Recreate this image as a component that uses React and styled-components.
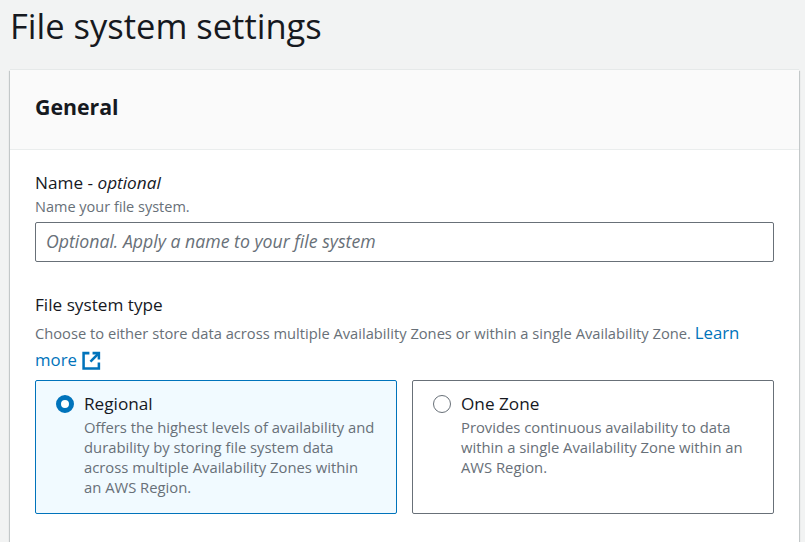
import React from 'react'
import styled, { createGlobalStyle } from 'styled-components'

const Global = createGlobalStyle`
    html, body {
        margin: 0;
        height: 100%;
        overflow: hidden;
        background: #f2f3f3;
        font-family: "Open Sans", "Noto Sans", sans-serif;
        color: #16191f;
    }
`

const Page = styled.div`
    width: 805px;
    height: 542px;
    overflow: hidden;
    padding: 0 6px 0 10px;
    box-sizing: border-box;
`

const Title = styled.h1`
    margin: 0;
    height: 70px;
    padding-top: 7px;
    box-sizing: border-box;
    font-size: 34.5px;
    line-height: 38px;
    font-weight: 400;
    color: #16191f;
`

const Card = styled.section`
    background: #fff;
    box-shadow: 0 -1px 0 0 #e6e9e9, 0 1px 1px 0 rgba(0, 28, 36, 0.3), 1px 1px 1px 0 rgba(0, 28, 36, 0.15), -1px 1px 1px 0 rgba(0, 28, 36, 0.15);
`

const CardHeader = styled.div`
    height: 80px;
    padding: 0 25px 6px;
    display: flex;
    align-items: center;
    background: #fafafa;
    border-bottom: 1px solid #eaeded;
    box-sizing: border-box;
`

const CardTitle = styled.h2`
    margin: 0;
    font-size: 21.3px;
    font-weight: 700;
    line-height: 26px;
`

const CardBody = styled.div`
    padding: 22px 25px 60px;
`

const Field = styled.div`
    margin-bottom: ${props => props.$gap || 0}px;
`

const Label = styled.div`
    font-size: 17.2px;
    line-height: 22px;
    em { font-style: italic; }
`

const Hint = styled.div`
    font-size: 14.5px;
    line-height: 20px;
    margin-top: 3px;
    color: #687078;
`

const Description = styled.div`
    margin-top: 4px;
    font-size: 14.7px;
    line-height: 26.6px;
    color: #687078;
`

const TextInput = styled.input`
    display: block;
    width: 100%;
    height: 40px;
    margin-top: 5px;
    padding: 0 10px 2px;
    box-sizing: border-box;
    border: 1px solid #687078;
    border-radius: 2px;
    background: #fff;
    font: italic 17.7px "Open Sans", "Noto Sans", sans-serif;
    &::placeholder {
        color: #687078;
        opacity: 1;
    }
`

const Link = styled.a`
    font-size: 16.8px;
    color: #0073bb;
    text-decoration: none;
    svg {
        margin-left: 5px;
        vertical-align: -4px;
    }
`

const Options = styled.div`
    display: grid;
    grid-template-columns: 1fr 1fr;
    gap: 15px;
    margin-top: 7px;
`

const Option = styled.label`
    height: 134px;
    box-sizing: border-box;
    padding: 12px 20px;
    display: flex;
    gap: 10px;
    border: 1px solid ${props => (props.$selected ? '#0073bb' : '#687078')};
    border-radius: 2px;
    background: ${props => (props.$selected ? '#f1faff' : '#fff')};
`

const Radio = styled.span`
    flex: none;
    width: 18px;
    height: 18px;
    margin-top: 2px;
    box-sizing: border-box;
    border-radius: 50%;
    background: #fff;
    border: ${props => (props.$checked ? '5px solid #0073bb' : '1.5px solid #687078')};
`

const OptionText = styled.div`
    display: flex;
    flex-direction: column;
`

const OptionTitle = styled.span`
    font-size: 17.2px;
    line-height: 22px;
    margin-bottom: 2px;
`

const OptionDesc = styled.span`
    font-size: 14.8px;
    line-height: 20px;
    color: #687078;
`

function ExternalIcon() {
    return (
        <svg width="19" height="19" viewBox="0 0 18 18" fill="none" stroke="#0073bb" strokeWidth="2.4">
            <path d="M7 2H1.5V16.5H16V11" />
            <path d="M10 2H16V8" />
            <path d="M16 2L8 10" />
        </svg>
    )
}

export default function App() {
    return (
        <Page>
            <Global />
            <Title>File system settings</Title>
            <Card>
                <CardHeader>
                    <CardTitle>General</CardTitle>
                </CardHeader>
                <CardBody>
                    <Field $gap={32}>
                        <Label>Name - <em>optional</em></Label>
                        <Hint>Name your file system.</Hint>
                        <TextInput placeholder="Optional. Apply a name to your file system" />
                    </Field>
                    <Field>
                        <Label>File system type</Label>
                        <Description>
                            Choose to either store data across multiple Availability Zones or within a single Availability Zone.{' '}
                            <Link href="#">Learn more<ExternalIcon /></Link>
                        </Description>
                        <Options>
                            <Option $selected>
                                <Radio $checked />
                                <OptionText>
                                    <OptionTitle>Regional</OptionTitle>
                                    <OptionDesc>Offers the highest levels of availability and durability by storing file system data across multiple Availability Zones within an AWS Region.</OptionDesc>
                                </OptionText>
                            </Option>
                            <Option>
                                <Radio />
                                <OptionText>
                                    <OptionTitle>One Zone</OptionTitle>
                                    <OptionDesc>Provides continuous availability to data within a single Availability Zone within an AWS Region.</OptionDesc>
                                </OptionText>
                            </Option>
                        </Options>
                    </Field>
                </CardBody>
            </Card>
        </Page>
    )
}
